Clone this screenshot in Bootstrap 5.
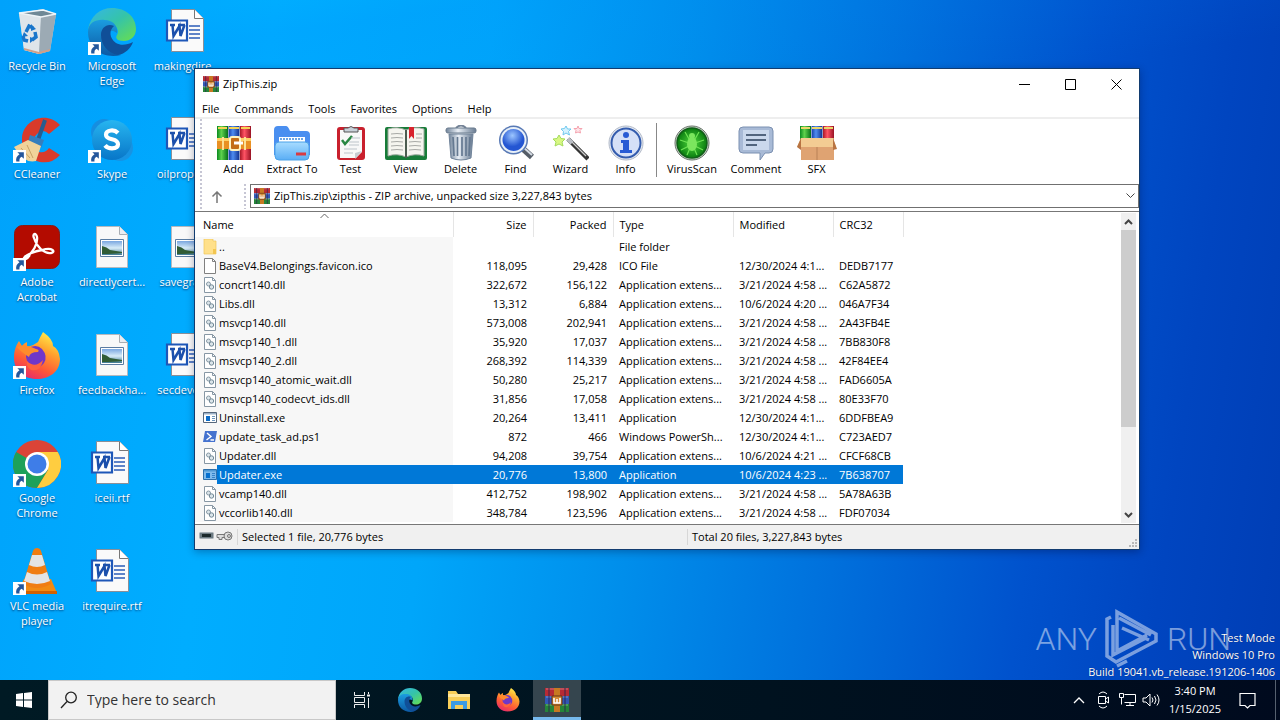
<!DOCTYPE html>
<html lang="en">
<head>
<meta charset="utf-8">
<meta name="viewport" content="width=device-width, initial-scale=1">
<title>ZipThis.zip</title>
<link rel="stylesheet" href="https://cdn.jsdelivr.net/npm/bootstrap@5.3.0/dist/css/bootstrap.min.css">
<style>
  body { font: 11px/16px "Open Sans", "Noto Sans", sans-serif; color: #000; }
  svg { display: block; flex: none; }
  button, input { font: inherit; color: inherit; }
  .plain { background: none; border: 0; padding: 0; }
  .screen {
    background:
      linear-gradient(172deg, transparent 4%, rgba(0,140,255,.16) 8%, transparent 24%),
      linear-gradient(98deg, #00a2fb 0%, #00adff 20%, #00a6fa 36%, #0090ec 50%, #0070dc 66%, #0052cd 80%, #0045c0 90%, #003db4 100%);
  }
  .desk-grid { display: grid; grid-auto-flow: column; grid-template-rows: repeat(6, 108px); grid-auto-columns: 74px; column-gap: 1px; width: max-content; }
  .shortcut { display: flex; flex-direction: column; align-items: center; padding-top: 8px; color: #fff; text-decoration: none; text-align: center; line-height: 15px; text-shadow: 0 1px 2px rgba(0,30,80,.8); }
  .shortcut svg { margin-bottom: 2px; }
  .shortcut span { max-width: 72px; }
  .shortcut .one-line { white-space: nowrap; }

  .app { left: 194px; top: 68px; width: 946px; border: 1px solid #123c70; background: #fff; box-shadow: 0 2px 8px rgba(0,0,40,.3); }
  .titlebar { height: 30px; padding-left: 8px; }
  .titlebar button { width: 46px; height: 30px; display: grid; place-items: center; }
  .menus { height: 20px; padding-left: 7px; gap: 15px; border-bottom: 2px solid #eee; }
  .menus button { height: 16px; }
  .grip { width: 2px; background: repeating-linear-gradient(#c6c6d4 0 2px, transparent 2px 4px); }
  .grip-lead { margin: 0 4px 0 5px; }
  .tools { height: 65px; }
  .tool { width: 55px; text-align: center; padding-top: 6px; }
  .tool svg { margin: 0 auto; }
  .tool-wide { width: 62px; }
  .tool-wider { width: 66px; }
  .divider { width: 1px; height: 54px; background: #888; margin: 4px 4px 0 3px; }
  .address { height: 25px; }
  .address-up { width: 22px; display: grid; place-items: center; }
  .path { height: 24px; border: 1px solid #707070; padding-left: 3px; gap: 4px; }
  .path input { border: 0; outline: 0; background: none; padding: 0; }
  .drop { width: 16px; height: 22px; display: grid; place-items: center; }
  .listing { border-top: 1px solid #777; border-bottom: 1px solid #777; margin-top: 2px; }
  .files { width: 708px; margin-bottom: 2px; table-layout: fixed; border-collapse: collapse; }
  .files th { height: 25px; font-weight: 400; padding: 0 6px; border-right: 1px solid #e5e5e5; position: relative; }
  .files td { height: 19px; padding: 0 0 0 6px; line-height: 19px; white-space: nowrap; }
  .files td:first-child, .files th:first-child { padding-left: 8px; }
  .files td:first-child { background: #f7f7f7; }
  .files td:first-child svg { display: inline-block; width: 14px; height: 16px; vertical-align: -4px; margin-right: 2px; }
  .files .num { text-align: right; padding-right: 6px; }
  .files .chosen td { background: #0078d7; color: #fff; }
  .files .chosen td:first-child { background: linear-gradient(90deg, #f7f7f7 22px, #0078d7 22px); }
  .sort-mark { position: absolute; left: 125px; top: 1px; }
  .scroller { width: 15px; background: #f0f0f0; margin: 1px 3px 1px 1px; }
  .scroller button { width: 15px; height: 17px; display: grid; place-items: center; }
  .thumb { height: 197px; background: #cdcdcd; }
  .status { height: 24px; background: #f0f0f0; }
  .status-mid { border-left: 1px solid #d7d7d7; padding-left: 4px; }
  .status-left { width: 450px; }

  .brand { right: 49px; bottom: 11px; color: #fff; opacity: .48; gap: 7px; font: 300 32px/48px Roboto, "Liberation Sans", sans-serif; }
  .build { right: 5px; bottom: 0; color: #fff; text-align: right; line-height: 17px; text-shadow: 0 0 1px #001a60; }

  .taskbar { height: 40px; background: linear-gradient(90deg, #001a24, #00121f 60%, #000a1e); color: #fff; }
  .task { width: 48px; height: 40px; display: grid; place-items: center; }
  .task-on { background: #35454e; border-bottom: 3px solid #76b9ed; padding-top: 2px; }
  .running { gap: 1px; padding-left: 1px; }
  .search { width: 288px; background: #f2f2f2; border: 1px solid #c8c8c8; padding-left: 11px; gap: 9px; color: #333; }
  .search input { font-size: 14px; border: 0; outline: 0; background: none; color: #333; }
  .search input::placeholder { color: #333; opacity: 1; }
  .tray { width: 24px; height: 40px; display: grid; place-items: center; }
  .clock { width: 56px; text-align: center; line-height: 18px; }
  .peek { width: 5px; border-left: 1px solid #56616f; }
</style>
</head>
<body>
<svg width="0" height="0" class="position-absolute" aria-hidden="true">
  <defs>
    <linearGradient id="gEdge1" x1="0" y1="0" x2="1" y2="1"><stop offset="0" stop-color="#35b5e8"/><stop offset=".5" stop-color="#35c4a8"/><stop offset="1" stop-color="#6adf4c"/></linearGradient>
    <linearGradient id="gEdge2" x1="0" y1="0" x2="0" y2="1"><stop offset="0" stop-color="#1b9de0"/><stop offset="1" stop-color="#0c59a4"/></linearGradient>
    <linearGradient id="gFox" x1=".8" y1="0" x2=".3" y2="1"><stop offset="0" stop-color="#fff44f"/><stop offset=".35" stop-color="#ffa42e"/><stop offset=".7" stop-color="#ff5a36"/><stop offset="1" stop-color="#e52b6c"/></linearGradient>
    <linearGradient id="gSky" x1="0" y1="0" x2="0" y2="1"><stop offset="0" stop-color="#27b5f0"/><stop offset="1" stop-color="#0876c8"/></linearGradient>
    <linearGradient id="gPhoto" x1="0" y1="0" x2="0" y2="1"><stop offset="0" stop-color="#7aa7e0"/><stop offset=".5" stop-color="#d8ecf8"/><stop offset="1" stop-color="#3d7890"/></linearGradient>
    <linearGradient id="gFold" x1="0" y1="0" x2="0" y2="1"><stop offset="0" stop-color="#a8dcff"/><stop offset="1" stop-color="#5aaef5"/></linearGradient>
    <linearGradient id="gG" x1="0" x2="1"><stop offset="0" stop-color="#0a8a20"/><stop offset=".4" stop-color="#5ed24d"/><stop offset="1" stop-color="#057018"/></linearGradient>
    <linearGradient id="gB" x1="0" x2="1"><stop offset="0" stop-color="#143ca8"/><stop offset=".4" stop-color="#4f8df0"/><stop offset="1" stop-color="#102f8c"/></linearGradient>
    <linearGradient id="gR" x1="0" x2="1"><stop offset="0" stop-color="#a81826"/><stop offset=".4" stop-color="#ff5364"/><stop offset="1" stop-color="#981224"/></linearGradient>
    <linearGradient id="gMet" x1="0" x2="1"><stop offset="0" stop-color="#71849a"/><stop offset=".4" stop-color="#e8eef5"/><stop offset="1" stop-color="#687b92"/></linearGradient>
    <radialGradient id="gLens" cx=".45" cy=".3"><stop offset="0" stop-color="#9cc6ff"/><stop offset="1" stop-color="#2456d2"/></radialGradient>
    <radialGradient id="gBug"><stop offset="0" stop-color="#4fd83c"/><stop offset="1" stop-color="#0a7c10"/></radialGradient>
  </defs>
  <symbol id="arrow" viewBox="0 0 12 12"><path fill="#fff" d="M0 0h12v12H0z"/><path fill="#24579c" d="M4 2h6v6L8 6.200Q5.500 7.500 6 10.500H3Q2.200 6.500 6 4z"/></symbol>
  <symbol id="word" viewBox="0 0 48 48">
    <path d="M13.500 1.500h23l9 9v33h-32z" fill="#fafafa" stroke="#8a8f98"/><path d="M36.500 1.500v9h9" fill="#fff" stroke="#777"/>
    <path d="M31 18h11M31 22h11M31 26h11M31 30h11" stroke="#2b5cb8" stroke-width="1.300"/>
    <path d="M9 12.500h20v20H9z" fill="#fff" stroke="#1e57b8" stroke-width="2.200"/>
    <path d="M12 17h5M20 17h7M14.500 17l1 11 6-10 1 10 4-11" fill="none" stroke="#1c50ac" stroke-width="2.500"/>
  </symbol>
  <symbol id="photo" viewBox="0 0 48 48">
    <path d="M8.500 2.500h23l8 8v33h-31z" fill="#f8f8f8" stroke="#b5b9bf"/><path d="M31.500 2.500v8h8" fill="#e9edf2" stroke="#a8adb3"/>
    <path d="M12.500 15.500h23v17h-23z" fill="#fff" stroke="#5b7ca2"/><path d="M14 17h20v14H14z" fill="url(#gPhoto)"/><path d="M14 22q5 1 8 4l12 2v1q-8 1-20 1z" fill="#315c35"/>
  </symbol>
  <symbol id="bin" viewBox="0 0 48 48">
    <path d="M6 5l24-4 13 5-6 37-11 3-15-4z" fill="#c3ced6"/><path d="M6 5l22 4-2 37-15-4z" fill="#dee5ea"/><path d="M28 9l15-3-6 37-11 3z" fill="#9caab4"/><path d="M6 5l24-3 13 4-15 3z" fill="#6f8896" stroke="#eef4f8" stroke-width="1.500"/>
    <path d="M11 40l15 4 11-3v2l-11 3-15-4z" fill="#cf9f88"/>
    <g fill="none" stroke="#1976cb" stroke-width="3.500"><path d="M13 24l3-6 4 2M22 24l1 5-4 3M15 33l-4-1-1-4"/></g><path d="M18 16l5 5-5 2zM22 31l-5 4v-6zM9 29l2-5 4 4z" fill="#1976cb"/>
  </symbol>
  <symbol id="edge" viewBox="0 0 48 48">
    <path d="M0 22C2 8 12 0 24 0c14 0 24 9 24 21 0 8-6 12-12 12-7 0-9-3-7-6 3-4-1-12-9-12C10 15 2 18 0 22z" fill="url(#gEdge1)"/>
    <path d="M0 24C0 14 9 11 17 12c8 0 13 6 12 13-7-6-14 2-12 9 2 7 9 12 16 13C15 51 0 41 0 24z" fill="url(#gEdge2)"/>
    <path d="M13 27c0-7 6-12 13-9-5 4-5 12 2 17 5 3 11 2 17-1-2 6-8 12-15 13C20 45 13 37 13 27z" fill="#104f98"/>
  </symbol>
  <symbol id="skype" viewBox="0 0 48 48"><circle cx="16" cy="16" r="13" fill="#168ee0"/><circle cx="32" cy="32" r="13" fill="#1793e3"/><circle cx="24" cy="24" r="20" fill="url(#gSky)"/><path d="M30 17q-3-3-7-2.500-5 .6-5 4.200 0 3.200 6 4.600 6 1.400 6 5 0 4-6 4-4.500 0-7-3" fill="none" stroke="#fff" stroke-width="4.200"/></symbol>
  <symbol id="ccl" viewBox="0 0 48 48"><path d="M47 9L36 18q-6-6-12 0c-7 7-5 16 2 18 5 1 8-1 10-4l11 7q-8 9-20 7Q8 42 9 22C10 4 33-6 47 9z" fill="#d93a2b"/><path d="M32 4l-7 20" stroke="#285d8f" stroke-width="4"/><path d="M17 19l14 5-3 8-13-6z" fill="#357ebd"/><path d="M15 24l13 6-5 15q-12 3-22-14z" fill="#f1d39a"/><path d="M8 32l9 10M14 29l6 13" stroke="#c9a266"/></symbol>
  <symbol id="acro" viewBox="0 0 48 48"><rect x="1.500" y="1.500" width="45" height="43" rx="8" fill="#b30b00" stroke="#8c1912"/><path d="M12 34C20 29 25 20 24 13c-1-5-5-3-3 1 3 9 10 16 17 15 5-1 2-6-9-3-7 1-17 5-18 8-1 2 3 2 6-3" fill="none" stroke="#fff" stroke-width="2.300"/></symbol>
  <symbol id="fox" viewBox="0 0 48 48"><path d="M30 0q10 7 10 14 6 3 7 13c0 13-11 20-23 20C10 47 1 38 1 26 1 17 4 12 6 9l3 5q2-3 5-4v5q6-1 11-5 2-5 5-10z" fill="url(#gFox)"/><path d="M14 17q9-6 15 0 6 7 2 14-7 9-15 1-5-6-2-15z" fill="#7037c8"/><path d="M4 15q7-4 19 2 4 1 2 3-8 0-9 5-8-5-12-10z" fill="#ff8c2c"/><path d="M14 29q8 8 16-1-2 12-12 10-5-3-4-9z" fill="#ff643c"/></symbol>
  <symbol id="chrome" viewBox="0 0 48 48"><circle cx="24" cy="24" r="24" fill="#db4437"/><path d="M24 24L3.200 12A24 24 0 0 0 24 48l11-18z" fill="#1da15a"/><path d="M24 12h20.800A24 24 0 0 1 24 48l11-18z" fill="#ffcd40"/><circle cx="24" cy="24" r="12" fill="#fff"/><circle cx="24" cy="24" r="9.500" fill="#3e7de8"/></symbol>
  <symbol id="vlc" viewBox="0 0 48 48"><path d="M11 31h27l6 14H4z" fill="#f28a12"/><path d="M4 43h40v3H4z" fill="#d26100"/><path d="M24 0q3 0 4 3l10 33q-14 8-28 0L20 3q1-3 4-3z" fill="#f07d12"/><path d="M19 7h10l3 10q-8 4-16 0zM14 24q10 5 20 0l3 9q-13 6-26 0z" fill="#e4e4e4"/></symbol>
  <symbol id="rar" viewBox="0 0 24 24"><path d="M0 0h24v8H0z" fill="#b72a34"/><path d="M0 8h24v8H0z" fill="#3157b4"/><path d="M0 16h24v8H0z" fill="#258539"/><path d="M1 1h22M1 9h22M1 17h22" stroke="#fff" stroke-opacity=".35"/><path d="M4 0v24M20 0v24" stroke="#2c214c" stroke-width="1.500" stroke-opacity=".6"/><path d="M9 0h6v24H9z" fill="#c77922"/><path d="M7 8h10v9H7z" fill="#d58d38" stroke="#663311"/><path d="M9 10v5h6v-5M12 11v4" stroke="#fff" stroke-width="1.500" fill="none"/></symbol>
  <symbol id="page" viewBox="0 0 14 16"><path d="M1.500.5h8l3 3v12h-11z" fill="#fff" stroke="#808080"/><path d="M9.500.5v3h3" fill="none" stroke="#808080"/></symbol>
  <symbol id="dll" viewBox="0 0 14 16"><path d="M1.500.5h8l3 3v12h-11z" fill="#fff" stroke="#8797a4"/><path d="M9.500.5v3h3" fill="none" stroke="#8797a4"/><circle cx="5.500" cy="7" r="2" fill="#dbe5ea" stroke="#8799a5"/><circle cx="8.500" cy="10" r="2.200" fill="#dbe5ea" stroke="#718896"/></symbol>
  <symbol id="exe" viewBox="0 0 14 16"><path d="M.5 2.500h13v10H.5z" fill="#fff" stroke="#56677c"/><path d="M1 3h12v1.500H1z" fill="#9db2c8"/><path d="M3 6h4v5H3z" fill="#0b6cc8"/><path d="M9 6.500h3M9 8.500h3M9 10.500h3" stroke="#6a94bd"/></symbol>
  <symbol id="exe-on" viewBox="0 0 14 16"><path d="M.5 2.500h13v10H.5z" fill="#7fbbec" stroke="#2f70aa"/><path d="M1 3h12v1.500H1z" fill="#4f98d2"/><path d="M3 6h4v5H3z" fill="#0670cf"/><path d="M9 6.500h3M9 8.500h3M9 10.500h3" stroke="#3583c8"/></symbol>
  <symbol id="ps" viewBox="0 0 14 16"><path d="M2 2h12l-2 11H0z" fill="#4472cf"/><path d="M4 4l4 3.500L3.500 11M7.500 11H11" fill="none" stroke="#fff" stroke-width="1.400"/></symbol>
  <symbol id="fold" viewBox="0 0 14 16"><path d="M1 0h9v2h3v13H1z" fill="#ffe08a" stroke="#efc558" stroke-width=".7"/><path d="M10 10h3v5h-3z" fill="#f3c64f"/></symbol>
</svg>

<div class="screen d-flex flex-column vh-100 overflow-hidden">
  <main class="flex-grow-1 position-relative overflow-hidden">
    <nav class="desk-grid" aria-label="Desktop">
      <a class="shortcut" href="#"><svg width="48" height="48"><use href="#bin"/></svg><span>Recycle Bin</span></a>
      <a class="shortcut" href="#"><svg width="48" height="48"><use href="#ccl"/><use href="#arrow" y="34" width="13" height="13"/></svg><span>CCleaner</span></a>
      <a class="shortcut" href="#"><svg width="48" height="48"><use href="#acro"/><use href="#arrow" y="34" width="13" height="13"/></svg><span>Adobe<br>Acrobat</span></a>
      <a class="shortcut" href="#"><svg width="48" height="48"><use href="#fox"/><use href="#arrow" y="34" width="13" height="13"/></svg><span>Firefox</span></a>
      <a class="shortcut" href="#"><svg width="48" height="48"><use href="#chrome"/><use href="#arrow" y="34" width="13" height="13"/></svg><span>Google<br>Chrome</span></a>
      <a class="shortcut" href="#"><svg width="48" height="48"><use href="#vlc"/><use href="#arrow" y="34" width="13" height="13"/></svg><span>VLC media<br>player</span></a>
      <a class="shortcut" href="#"><svg width="48" height="48"><use href="#edge"/><use href="#arrow" y="34" width="13" height="13"/></svg><span>Microsoft<br>Edge</span></a>
      <a class="shortcut" href="#"><svg width="48" height="48"><use href="#skype"/><use href="#arrow" y="34" width="13" height="13"/></svg><span>Skype</span></a>
      <a class="shortcut" href="#"><svg width="48" height="48"><use href="#photo"/></svg><span class="one-line">directlycert...</span></a>
      <a class="shortcut" href="#"><svg width="48" height="48"><use href="#photo"/></svg><span class="one-line">feedbackha...</span></a>
      <a class="shortcut" href="#"><svg width="48" height="48"><use href="#word" x="-5"/></svg><span>iceii.rtf</span></a>
      <a class="shortcut" href="#"><svg width="48" height="48"><use href="#word" x="-5"/></svg><span>itrequire.rtf</span></a>
      <a class="shortcut" href="#"><svg width="48" height="48"><use href="#word" x="-5"/></svg><span class="one-line">makingdire...</span></a>
      <a class="shortcut" href="#"><svg width="48" height="48"><use href="#word" x="-5"/></svg><span class="one-line">oilpropert...</span></a>
      <a class="shortcut" href="#"><svg width="48" height="48"><use href="#photo"/></svg><span class="one-line">savegrad...</span></a>
      <a class="shortcut" href="#"><svg width="48" height="48"><use href="#word" x="-5"/></svg><span class="one-line">secdevelo...</span></a>
    </nav>

    <div class="brand position-absolute d-flex align-items-center" aria-hidden="true">
      <span>ANY</span>
      <svg width="56" height="60" viewBox="0 0 56 60" fill="none" stroke="#fff" stroke-width="3.500"><path d="M7 8l-4 2v37l9 6 40-21v-7L13 3v39l30-16M9 16v30l33-17M18 19l27 12M15 9l32 17M13 57l10-5"/></svg>
      <span>RUN</span>
    </div>
    <div class="build position-absolute">Test Mode<br>Windows 10 Pro<br>Build 19041.vb_release.191206-1406</div>

    <section class="app position-absolute" aria-label="ZipThis.zip">
      <header class="titlebar d-flex align-items-center">
        <svg width="16" height="16"><use href="#rar"/></svg><span class="ms-1 me-auto">ZipThis.zip</span>
        <button class="plain" type="button" aria-label="Minimize"><svg width="11" height="11" stroke="#000"><path d="M0 5.500h11"/></svg></button>
        <button class="plain" type="button" aria-label="Maximize"><svg width="11" height="11" fill="none" stroke="#000"><path d="M.5.5h10v10H.5z"/></svg></button>
        <button class="plain" type="button" aria-label="Close"><svg width="11" height="11" stroke="#000"><path d="M.5.500l10 10M10.500.500l-10 10"/></svg></button>
      </header>
      <nav class="menus d-flex align-items-end">
        <button class="plain" type="button">File</button><button class="plain" type="button">Commands</button><button class="plain" type="button">Tools</button><button class="plain" type="button">Favorites</button><button class="plain" type="button">Options</button><button class="plain" type="button">Help</button>
      </nav>
      <div class="d-flex">
        <div class="grip grip-lead"></div>
        <div class="flex-grow-1">
          <div class="tools d-flex align-items-start">
            <button class="tool plain" type="button"><svg width="36" height="36" viewBox="0 0 36 36"><path d="M1 1h11v34H1z" fill="url(#gG)"/><path d="M12.500 1h11v34h-11z" fill="url(#gB)"/><path d="M24 1h11v34H24z" fill="url(#gR)"/><path d="M2 3h9M13 3h10M25 3h9" stroke="#f5d456" stroke-width="2"/><path d="M1 13h34v11H1z" fill="#e99023"/><path d="M1 13h34v3H1z" fill="#ffd065"/><path d="M7 12v13M29 12v13" stroke="#fbe096" stroke-width="2"/><rect x="14" y="12" width="10" height="13" rx="2" fill="#c46d16" stroke="#fff3c0" stroke-width="2"/><path d="M18 18h9" stroke="#fff" stroke-width="3"/></svg>Add</button>
            <button class="tool tool-wide plain text-nowrap" type="button"><svg width="36" height="36" viewBox="0 0 36 36"><path d="M0 5q0-4 4-4h8q2 0 4 5h16q4 0 4 4v20H0z" fill="#4a8ff0"/><path d="M5 12h26v10H5z" fill="#fff"/><path d="M6 14h24" stroke="#6ca5e5" stroke-width="2" stroke-dasharray="2 1"/><rect x="1" y="17" width="34" height="18" rx="4" fill="url(#gFold)" stroke="#4aa1e8"/><path d="M22 29h10" stroke="#d83b43" stroke-width="3"/></svg>Extract To</button>
            <button class="tool plain" type="button"><svg width="36" height="36" viewBox="0 0 36 36"><rect x="4" y="2" width="28" height="33" rx="3" fill="#c9202d"/><path d="M7 5h22v22l-6 6H7z" fill="#f8f8f8"/><path d="M29 26l-7 8v-6z" fill="#c7ccd2"/><path d="M11 7V3h4q3-3 6 0h4v4z" fill="#c8d0d8" stroke="#555"/><path d="M9 15l3 4 7-8" fill="none" stroke="#298743" stroke-width="2.500"/><path d="M18 13h9M16 17h10M16 20h10M11 24h13M11 28h9" stroke="#bdc4ca"/></svg>Test</button>
            <button class="tool plain" type="button"><svg width="44" height="36" viewBox="0 0 44 36"><rect x="1" y="2" width="42" height="33" rx="2" fill="#177c38"/><path d="M4 4q9-3 18 1v27q-9-4-18-1zM40 4q-9-3-18 1v27q9-4 18-1z" fill="#f5f5ef" stroke="#9ba79c"/><path d="M7 9q6-1 12 0M7 13q6-1 12 0M7 17q6-1 12 0M7 21q6-1 12 0M7 25q6-1 12 0M25 17q6-1 12 0M25 21q6-1 12 0M25 25q6-1 12 0M32 9h6M32 13h6" fill="none" stroke="#a8aaa6"/><path d="M22 5v28" stroke="#4c5c50" stroke-width="2"/><path d="M25 2h5v12l-2.500-3-2.500 3z" fill="#d8232d"/></svg>View</button>
            <button class="tool plain" type="button"><svg width="36" height="36" viewBox="0 0 36 36"><path d="M13 3q5-5 10 0" fill="none" stroke="#748397" stroke-width="2"/><rect x="3" y="3" width="30" height="5" rx="2" fill="url(#gMet)" stroke="#697a8d"/><path d="M6 9h24l-2 24q-10 4-20 0z" fill="url(#gMet)" stroke="#71849a"/><path d="M10 12l1 19M14.500 12v19M19 12v19M23 12v19M27 12l-1 19" stroke="#657991" stroke-width="1.700"/></svg>Delete</button>
            <button class="tool plain" type="button"><svg width="36" height="36" viewBox="0 0 36 36"><path d="M23 22l11 10" stroke="#555d67" stroke-width="6"/><path d="M25 22l9 8" stroke="#d5dce4" stroke-width="2"/><circle cx="15.500" cy="15" r="14.500" fill="#5879b5"/><circle cx="15.500" cy="15" r="13" fill="#e8f0f8"/><circle cx="15.500" cy="15" r="11" fill="url(#gLens)"/></svg>Find</button>
            <button class="tool plain" type="button"><svg width="36" height="36" viewBox="0 0 36 36"><path d="M15 14l20 20" stroke="#343434" stroke-width="4.500"/><path d="M15 13l18 18" stroke="#ccc" stroke-width="1.300"/><path d="M15 14l4 4" stroke="#b9bdc4" stroke-width="4"/><path d="M6 10l2 3.500 4 .5-3 3 1 4-4-2-4 2 1-4-3-3 4-.5z" fill="#d9f784" stroke="#a4dc5c"/><path d="M13 1l1.500 3h3.500l-2.500 2.500 1 3.500-3.500-2-3 2 .5-3.500L8 4l3.500-.5z" fill="#d4f2ff" stroke="#6fc8ee"/><path d="M25 1l1 2.500h3l-2 2 .5 2.500-2.500-1-2.500 1 .5-2.500-2-2h3z" fill="#ffe6ea" stroke="#f5a3af"/></svg>Wizard</button>
            <button class="tool plain" type="button"><svg width="36" height="36" viewBox="0 0 36 36"><circle cx="18" cy="18" r="17" fill="#e9edf3" stroke="#b1b9c8"/><circle cx="18" cy="18" r="14.500" fill="#d5e0f7" stroke="#345cae" stroke-width="2"/><circle cx="18" cy="10" r="3" fill="#285bd4"/><path d="M13 15h8v10h3v3H12v-3h3v-7h-2z" fill="#285bd4"/></svg>Info</button>
            <div class="divider"></div>
            <button class="tool tool-wide plain" type="button"><svg width="36" height="36" viewBox="0 0 36 36"><circle cx="18" cy="18" r="17" fill="#d1d9d2" stroke="#667167"/><circle cx="18" cy="18" r="15" fill="url(#gBug)" stroke="#115e18" stroke-width="1.500"/><path d="M11 7l4 7M25 7l-4 7M6 15l9 3M30 15l-9 3M7 25l8-4M29 25l-8-4M13 30l3-7M23 30l-3-7" stroke="#6fe455" stroke-width="1.200"/><ellipse cx="18" cy="19" rx="5" ry="7" fill="#7be65e"/><circle cx="18" cy="11" r="3" fill="#7be65e"/></svg>VirusScan</button>
            <button class="tool tool-wider plain" type="button"><svg width="36" height="36" viewBox="0 0 36 36"><path d="M5 2h26q4 0 4 4v18q0 4-4 4h-4l-5 7v-7H5q-4 0-4-4V6q0-4 4-4z" fill="#a8bad6" stroke="#7b90b1"/><path d="M5 5h26v20H5z" fill="#cad8ec"/><path d="M8 10h20M8 15h20M8 20h11" stroke="#52657e" stroke-width="2"/></svg>Comment</button>
            <button class="tool plain" type="button"><svg width="42" height="36" viewBox="0 0 42 36"><path d="M4 1h11v14H4z" fill="url(#gG)"/><path d="M15.500 1h11v14h-11z" fill="url(#gB)"/><path d="M27 1h11v14H27z" fill="url(#gR)"/><path d="M5 3h9M16 3h10M28 3h9" stroke="#ebd76b" stroke-width="2"/><path d="M5 13h33v22H5z" fill="#dfa372"/><path d="M5 13h32l3 9H1z" fill="#f3cc93"/><path d="M1 22l4-9v12zM41 24l-4-11v12z" fill="#b87443"/><path d="M21 22v13" stroke="#b98156"/></svg>SFX</button>
          </div>
          <div class="address d-flex align-items-start">
            <button class="plain address-up align-self-center me-3" type="button" aria-label="Up one level"><svg width="12" height="12" fill="none" stroke="#777" stroke-width="1.500"><path d="M6 12V1M1.500 5.500L6 1l4.500 4.500"/></svg></button>
            <div class="grip align-self-stretch me-1"></div>
            <div class="path d-flex align-items-center flex-grow-1">
              <svg width="16" height="16"><use href="#rar"/></svg>
              <input class="flex-grow-1" type="text" aria-label="Path" value="ZipThis.zip\zipthis - ZIP archive, unpacked size 3,227,843 bytes">
              <button class="drop plain" type="button" aria-label="Show paths"><svg width="9" height="6" fill="none" stroke="#444"><path d="M.5.500l4 4 4-4"/></svg></button>
            </div>
          </div>
        </div>
      </div>

      <div class="listing d-flex">
        <div class="flex-grow-1">
          <table class="files">
            <colgroup><col style="width:258px"><col style="width:80px"><col style="width:80px"><col style="width:120px"><col style="width:100px"><col style="width:70px"></colgroup>
            <thead><tr><th>Name<svg class="sort-mark" width="9" height="6" fill="none" stroke="#666"><path d="M.5 5l4-4 4 4"/></svg></th><th class="num">Size</th><th class="num">Packed</th><th>Type</th><th>Modified</th><th>CRC32</th></tr></thead>
            <tbody>
              <tr><td><svg><use href="#fold"/></svg>..</td><td></td><td></td><td>File folder</td><td></td><td></td></tr>
              <tr><td><svg><use href="#page"/></svg>BaseV4.Belongings.favicon.ico</td><td class="num">118,095</td><td class="num">29,428</td><td>ICO File</td><td>12/30/2024 4:1...</td><td>DEDB7177</td></tr>
              <tr><td><svg><use href="#dll"/></svg>concrt140.dll</td><td class="num">322,672</td><td class="num">156,122</td><td>Application extens...</td><td>3/21/2024 4:58 ...</td><td>C62A5872</td></tr>
              <tr><td><svg><use href="#dll"/></svg>Libs.dll</td><td class="num">13,312</td><td class="num">6,884</td><td>Application extens...</td><td>10/6/2024 4:20 ...</td><td>046A7F34</td></tr>
              <tr><td><svg><use href="#dll"/></svg>msvcp140.dll</td><td class="num">573,008</td><td class="num">202,941</td><td>Application extens...</td><td>3/21/2024 4:58 ...</td><td>2A43FB4E</td></tr>
              <tr><td><svg><use href="#dll"/></svg>msvcp140_1.dll</td><td class="num">35,920</td><td class="num">17,037</td><td>Application extens...</td><td>3/21/2024 4:58 ...</td><td>7BB830F8</td></tr>
              <tr><td><svg><use href="#dll"/></svg>msvcp140_2.dll</td><td class="num">268,392</td><td class="num">114,339</td><td>Application extens...</td><td>3/21/2024 4:58 ...</td><td>42F84EE4</td></tr>
              <tr><td><svg><use href="#dll"/></svg>msvcp140_atomic_wait.dll</td><td class="num">50,280</td><td class="num">25,217</td><td>Application extens...</td><td>3/21/2024 4:58 ...</td><td>FAD6605A</td></tr>
              <tr><td><svg><use href="#dll"/></svg>msvcp140_codecvt_ids.dll</td><td class="num">31,856</td><td class="num">17,058</td><td>Application extens...</td><td>3/21/2024 4:58 ...</td><td>80E33F70</td></tr>
              <tr><td><svg><use href="#exe"/></svg>Uninstall.exe</td><td class="num">20,264</td><td class="num">13,411</td><td>Application</td><td>12/30/2024 4:1...</td><td>6DDFBEA9</td></tr>
              <tr><td><svg><use href="#ps"/></svg>update_task_ad.ps1</td><td class="num">872</td><td class="num">466</td><td>Windows PowerSh...</td><td>12/30/2024 4:1...</td><td>C723AED7</td></tr>
              <tr><td><svg><use href="#dll"/></svg>Updater.dll</td><td class="num">94,208</td><td class="num">39,754</td><td>Application extens...</td><td>10/6/2024 4:21 ...</td><td>CFCF68CB</td></tr>
              <tr class="chosen"><td><svg><use href="#exe-on"/></svg>Updater.exe</td><td class="num">20,776</td><td class="num">13,800</td><td>Application</td><td>10/6/2024 4:23 ...</td><td>7B638707</td></tr>
              <tr><td><svg><use href="#dll"/></svg>vcamp140.dll</td><td class="num">412,752</td><td class="num">198,902</td><td>Application extens...</td><td>3/21/2024 4:58 ...</td><td>5A78A63B</td></tr>
              <tr><td><svg><use href="#dll"/></svg>vccorlib140.dll</td><td class="num">348,784</td><td class="num">123,596</td><td>Application extens...</td><td>3/21/2024 4:58 ...</td><td>FDF07034</td></tr>
            </tbody>
          </table>
        </div>
        <div class="scroller d-flex flex-column">
          <button class="plain" type="button" aria-label="Scroll up"><svg width="9" height="6" fill="none" stroke="#444" stroke-width="2"><path d="M1 5l3.500-3.500L8 5"/></svg></button>
          <div class="thumb"></div>
          <button class="plain mt-auto" type="button" aria-label="Scroll down"><svg width="9" height="6" fill="none" stroke="#444" stroke-width="2"><path d="M1 1l3.500 3.500L8 1"/></svg></button>
        </div>
      </div>
      <footer class="status d-flex align-items-center">
        <svg class="ms-1" width="34" height="14" viewBox="0 0 34 14"><rect x=".5" y="2.500" width="14" height="6" rx="1" fill="#6c7a82" stroke="#aab2b8"/><path d="M3 5.500h9" stroke="#1c292c" stroke-width="3"/><g fill="#ddd" stroke="#777"><path d="M18 4.500h8v3h-3v2h-3v-2h-2z"/><circle cx="29" cy="6" r="4"/><circle cx="30" cy="6" r="1.500"/></g></svg>
        <span class="status-mid status-left ms-1">Selected 1 file, 20,776 bytes</span>
        <span class="status-mid me-auto">Total 20 files, 3,227,843 bytes</span>
        <svg class="align-self-end" width="11" height="11" fill="#b8b8b8"><path d="M7 1h2v2H7zM7 4h2v2H7zM7 7h2v2H7zM4 4h2v2H4zM4 7h2v2H4zM1 7h2v2H1z"/></svg>
      </footer>
    </section>
  </main>

  <footer class="taskbar d-flex">
    <button class="plain task" type="button" aria-label="Start"><svg width="16" height="16" fill="#fff"><path d="M0 2l7-1v6.500H0zM8 1l8-1v7.500H8zM0 8.500h7V15l-7-1zM8 8.500h8V16l-8-1z"/></svg></button>
    <label class="search d-flex align-items-center">
      <svg width="18" height="18" fill="none" stroke="#222" stroke-width="1.300"><circle cx="11" cy="6.500" r="5.300"/><path d="M7 10.500L1 17"/></svg>
      <input class="flex-grow-1 p-0" type="text" placeholder="Type here to search" aria-label="Type here to search">
    </label>
    <div class="running d-flex me-auto">
      <button class="plain task" type="button" aria-label="Task view"><svg width="17" height="16" fill="none" stroke="#eee"><path d="M1.500 0v3.500h10V0M1.500 16v-3.500h10V16M1.500 5.500h10v5h-10zM15.500 0v2M15.500 6v10"/><path d="M14 3.500h3" stroke-width="2"/></svg></button>
      <button class="plain task" type="button" aria-label="Microsoft Edge"><svg width="24" height="24"><use href="#edge"/></svg></button>
      <button class="plain task" type="button" aria-label="File Explorer"><svg width="22" height="20" viewBox="0 0 22 20"><path d="M0 1h8l2 3h12v15H0z" fill="#f8ce58"/><path d="M0 4h22v3H0z" fill="#ffe79b"/><path d="M3 11h16v8h-4v-4H7v4H3z" fill="#3c9be3"/></svg></button>
      <button class="plain task" type="button" aria-label="Firefox"><svg width="24" height="24"><use href="#fox"/></svg></button>
      <button class="plain task task-on" type="button" aria-label="WinRAR"><svg width="24" height="24"><use href="#rar"/></svg></button>
    </div>
    <button class="plain tray" type="button" aria-label="Hidden icons"><svg width="12" height="8" fill="none" stroke="#fff" stroke-width="1.300"><path d="M1 7l5-5 5 5"/></svg></button>
    <button class="plain tray" type="button" aria-label="Camera"><svg width="14" height="18" fill="none" stroke="#fff"><path d="M3 3q4-4 8 0M3 15q4 4 8 0M2.500 5.500h7v7h-7zM9.500 8l3-2v6l-3-2"/></svg></button>
    <button class="plain tray" type="button" aria-label="Network"><svg width="17" height="16" fill="none" stroke="#fff"><path d="M5.500 2.500h11v8h-11M.5 1.500h4v4h-4zM2.500 5.500v7M11 10.500v3M7 13.500h8"/></svg></button>
    <button class="plain tray" type="button" aria-label="Volume"><svg width="18" height="14" fill="none" stroke="#fff"><path d="M1 5h3l4-4v12L4 9H1zM10 4.500q2 2.500 0 5M12.500 3q3 4 0 8M15 1.500q4 5.500 0 11"/></svg></button>
    <button class="plain clock ms-1" type="button"><span class="d-block">3:40 PM</span><span class="d-block">1/15/2025</span></button>
    <button class="plain task me-1" type="button" aria-label="Notifications"><svg width="17" height="17" fill="none" stroke="#fff" stroke-width="1.200"><path d="M1 1.500h15v12h-5l-2.500 2.500L6 13.500H1z"/></svg></button>
    <div class="peek"></div>
  </footer>
</div>
<script src="https://cdn.jsdelivr.net/npm/bootstrap@5.3.0/dist/js/bootstrap.bundle.min.js"></script>
</body>
</html>
